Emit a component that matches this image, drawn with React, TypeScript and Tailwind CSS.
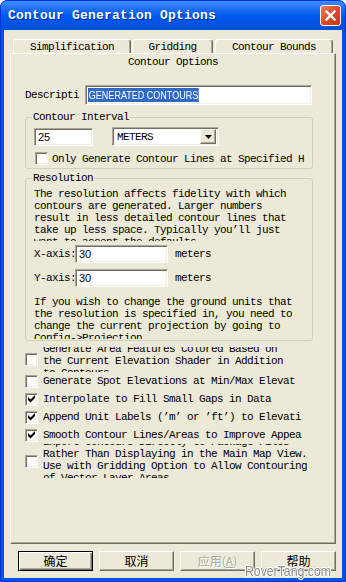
import React from "react";

const sunken =
  "border border-t-[#ACA899] border-l-[#ACA899] border-b-white border-r-white bg-white shadow-[inset_1px_1px_0_#716F64,inset_-1px_-1px_0_#F1EFE2]";

const raised =
  "border border-t-white border-l-white border-b-[#716F64] border-r-[#716F64] bg-[#ECE9D8] shadow-[inset_-1px_-1px_0_#ACA899]";

const resolutionText = [
  "The resolution affects fidelity with which",
  "contours are generated. Larger numbers",
  "result in less detailed contour lines that",
  "take up less space. Typically you’ll just",
  "want to accept the defaults.",
];

const unitsText = [
  "If you wish to change the ground units that",
  "the resolution is specified in, you need to",
  "change the current projection by going to",
  "Config->Projection.",
];

const Check: React.FC<{ checked?: boolean }> = ({ checked }) => (
  <span className={`flex h-[13px] w-[13px] shrink-0 items-center justify-center ${sunken}`}>
    {checked && (
      <svg width="7" height="8" viewBox="0 0 7 8">
        <polygon points="0,2 2.5,4.5 7,0 7,3 2.5,7.5 0,5" fill="#000" />
      </svg>
    )}
  </span>
);

const Tab: React.FC<{ label: string; className: string }> = ({ label, className }) => (
  <div
    className={`flex items-center justify-center rounded-t-[3px] border-t border-l border-r border-t-white border-l-white border-r-[#716F64] pt-[1px] shadow-[inset_-1px_0_0_#ACA899] ${className}`}
  >
    {label}
  </div>
);

const Button: React.FC<{ children: React.ReactNode; isDefault?: boolean; disabled?: boolean }> = ({
  children,
  isDefault,
  disabled,
}) => (
  <button
    className={
      isDefault
        ? "flex h-[20px] w-[75px] items-center justify-center border border-black bg-[#ECE9D8] font-['Noto_Sans_CJK_SC',sans-serif] text-[12px] tracking-normal shadow-[inset_1px_1px_0_#fff,inset_-1px_-1px_0_#716F64,inset_-2px_-2px_0_#ACA899]"
        : disabled
        ? `flex h-[20px] w-[75px] items-center justify-center ${raised} font-['Noto_Sans_CJK_SC',sans-serif] text-[12px] tracking-normal text-[#ACA899] [text-shadow:1px_1px_0_#fff]`
        : `flex h-[20px] w-[75px] items-center justify-center ${raised} font-['Noto_Sans_CJK_SC',sans-serif] text-[12px] tracking-normal`
    }
  >
    {children}
  </button>
);

export default function App() {
  return (
    <div className="h-[582px] w-[346px] bg-white">
      <div className="relative flex h-[582px] w-[346px] flex-col overflow-hidden rounded-t-[7px] border border-[#0831D9] bg-[#0055E5] font-['Liberation_Mono',monospace] text-[11px] leading-[12px] tracking-[-0.6px] text-black">
        {/* title bar */}
        <div className="flex h-[29px] shrink-0 items-center justify-between bg-linear-to-b from-[#3D8BFF] via-[#0058EE] to-[#0050DA] pl-[7px] pr-[4px]">
          <span className="text-[13px] font-bold tracking-[0.2px] text-white [text-shadow:1px_1px_0_#0A2A8E]">
            Contour Generation Options
          </span>
          <button className="flex h-[21px] w-[21px] items-center justify-center rounded-[3px] border border-white bg-linear-to-br from-[#EE7E5B] via-[#DC4A22] to-[#C13914]">
            <svg width="11" height="11" viewBox="0 0 11 11">
              <path d="M1.5 1.5L9.5 9.5M9.5 1.5L1.5 9.5" stroke="#fff" strokeWidth="2.4" strokeLinecap="square" />
            </svg>
          </button>
        </div>

        {/* dialog body */}
        <div className="mx-[3px] mb-[3px] flex flex-1 flex-col bg-[#ECE9D8] pt-[9px]">
          <div className="flex h-[14px] pl-[9px]">
            <Tab label="Simplification" className="w-[118px]" />
            <Tab label="Gridding" className="ml-[1px] w-[81px]" />
            <Tab label="Contour Bounds" className="ml-[2px] w-[118px]" />
          </div>

          <div className="ml-[6px] flex h-[491px] w-[326px] flex-col border border-t-white border-l-white border-b-[#716F64] border-r-[#716F64] shadow-[inset_-1px_-1px_0_#ACA899]">
            <div className="flex h-[16px] items-center justify-center">Contour Options</div>

            <div className="mt-[15px] flex h-[20px] items-center pl-[14px]">
              <span className="w-[60px]">Descripti</span>
              <div className={`flex h-[20px] w-[227px] items-center pl-[2px] ${sunken}`}>
                <span className="inline-block origin-left scale-x-[0.82] bg-[#316AC5] px-[1px] font-['Liberation_Sans',sans-serif] text-[11px] leading-[14px] tracking-normal text-white">
                  GENERATED CONTOURS
                </span>
              </div>
            </div>

            <fieldset className="ml-[14px] mt-[6px] w-[288px] rounded-[3px] border border-[#D0D0BF]">
              <legend className="ml-[6px] px-[1px]">Contour Interval</legend>
              <div className="pl-[8px] pb-[3px]">
                <div className="mt-[4px] flex h-[19px] items-center">
                  <div className={`flex h-[18px] w-[59px] items-center pl-[3px] font-['Liberation_Sans',sans-serif] text-[11px] tracking-normal ${sunken}`}>
                    25
                  </div>
                  <div className={`ml-[19px] flex h-[19px] w-[107px] items-center justify-between pl-[4px] pr-[2px] ${sunken}`}>
                    <span>METERS</span>
                    <span className={`flex h-[15px] w-[16px] items-center justify-center ${raised}`}>
                      <svg width="7" height="4" viewBox="0 0 7 4">
                        <polygon points="0,0 7,0 3.5,4" fill="#000" />
                      </svg>
                    </span>
                  </div>
                </div>
                <div className="mt-[6px] flex h-[13px] items-center pl-[1px]">
                  <Check />
                  <span className="ml-[4px] whitespace-nowrap">Only Generate Contour Lines at Specified H</span>
                </div>
              </div>
            </fieldset>

            <fieldset className="ml-[14px] mt-[3px] w-[288px] rounded-[3px] border border-[#D0D0BF]">
              <legend className="ml-[6px] px-[1px]">Resolution</legend>
              <div className="pl-[8px] pb-[1px]">
                <div className="mt-[4px] h-[53px] overflow-hidden">
                  {resolutionText.map((l) => (
                    <div key={l} className="whitespace-nowrap">{l}</div>
                  ))}
                </div>
                <div className="mt-[4px] flex h-[18px] items-center">
                  <span className="w-[41px] whitespace-nowrap">X-axis:</span>
                  <div className={`flex h-[18px] w-[93px] items-center pl-[3px] font-['Liberation_Sans',sans-serif] text-[11px] tracking-normal ${sunken}`}>
                    30
                  </div>
                  <span className="ml-[7px]">meters</span>
                </div>
                <div className="mt-[6px] flex h-[18px] items-center">
                  <span className="w-[41px] whitespace-nowrap">Y-axis:</span>
                  <div className={`flex h-[18px] w-[93px] items-center pl-[3px] font-['Liberation_Sans',sans-serif] text-[11px] tracking-normal ${sunken}`}>
                    30
                  </div>
                  <span className="ml-[7px]">meters</span>
                </div>
                <div className="mt-[9px] h-[43px] overflow-hidden">
                  {unitsText.map((l) => (
                    <div key={l} className="whitespace-nowrap">{l}</div>
                  ))}
                </div>
              </div>
            </fieldset>

            <div className="ml-[14px] mt-[6px] flex flex-col">
              <div className="flex h-[25px] items-center">
                <Check />
                <div className="ml-[5px] h-[25px] overflow-hidden">
                  <div className="-mt-[4px] whitespace-nowrap">
                    <div>Generate Area Features Colored Based on</div>
                    <div>the Current Elevation Shader in Addition</div>
                    <div>to Contours</div>
                  </div>
                </div>
              </div>
              <div className="flex h-[18px] items-center">
                <Check />
                <span className="ml-[5px] whitespace-nowrap">Generate Spot Elevations at Min/Max Elevat</span>
              </div>
              <div className="flex h-[18px] items-center">
                <Check checked />
                <span className="ml-[5px] whitespace-nowrap">Interpolate to Fill Small Gaps in Data</span>
              </div>
              <div className="flex h-[18px] items-center">
                <Check checked />
                <span className="ml-[5px] whitespace-nowrap">Append Unit Labels (’m’ or ’ft’) to Elevati</span>
              </div>
              <div className="flex h-[18px] items-center">
                <Check checked />
                <span className="ml-[5px] whitespace-nowrap">Smooth Contour Lines/Areas to Improve Appea</span>
              </div>
              <div className="flex h-[34px] items-center">
                <Check />
                <div className="ml-[5px] h-[34px] overflow-hidden">
                  <div className="-mt-[8px] whitespace-nowrap">
                    <div>Export Contours Directly to Package Files</div>
                    <div>Rather Than Displaying in the Main Map View.</div>
                    <div>Use with Gridding Option to Allow Contouring</div>
                    <div>of Vector Layer Areas</div>
                  </div>
                </div>
              </div>
            </div>
          </div>

          <div className="mt-[7px] flex gap-[6px] pl-[14px]">
            <Button isDefault>确定</Button>
            <Button>取消</Button>
            <Button disabled>
              应用(<span className="underline">A</span>)
            </Button>
            <Button>帮助</Button>
          </div>
        </div>

        <span className="absolute bottom-[3px] right-[14px] inline-block origin-right scale-x-[0.82] font-['Liberation_Sans',sans-serif] text-[15px] leading-[15px] tracking-normal text-[#8C8C8C] [text-shadow:1px_0_0_#fff,-1px_0_0_#fff,0_1px_0_#fff,0_-1px_0_#fff]">
          RoverTang.com
        </span>
      </div>
    </div>
  );
}
